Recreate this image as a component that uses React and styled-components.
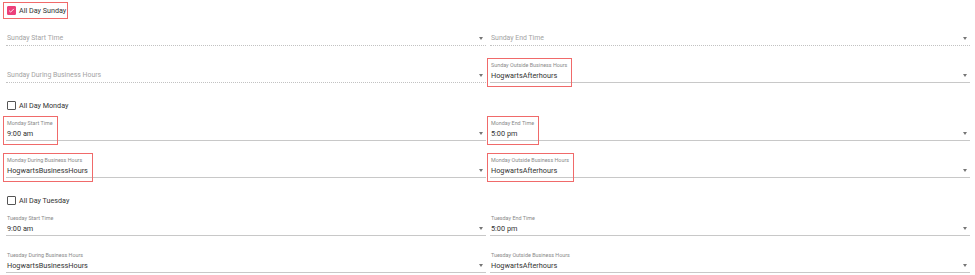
import styled, { createGlobalStyle, css } from 'styled-components';

const GlobalStyle = createGlobalStyle`
  body {
    margin: 0;
    background: #fff;
    font-family: Roboto, "Liberation Sans", sans-serif;
  }
`;

const MARK = '#f06a6a';

const highlight = css`
  &::after {
    content: '';
    position: absolute;
    top: -3px;
    bottom: -6px;
    left: -3px;
    right: -5px;
    border: 1px solid ${MARK};
    pointer-events: none;
  }
`;

const Page = styled.div`
  padding: 2px 5px 0 6px;
`;

const DaySection = styled.section`
  & + & {
    margin-top: 14px;
  }
`;

const CheckRow = styled.div`
  height: 17px;
  margin-bottom: 5px;
  display: flex;
`;

const CheckLabel = styled.label`
  display: inline-flex;
  align-items: center;
  gap: 3px;
  height: 17px;
  margin-left: -3px;
  padding: 0 2px 0 4px;
  font-size: 7.2px;
  color: #333;
  ${(p) => p.$marked && css`box-shadow: inset 0 0 0 1px ${MARK};`}
`;

const Box = styled.span`
  box-sizing: border-box;
  width: 9px;
  height: 9px;
  border-radius: 1px;
  display: flex;
  align-items: center;
  justify-content: center;
  border: 1.3px solid ${(p) => (p.$checked ? '#ec407a' : '#555')};
  background: ${(p) => (p.$checked ? '#ec407a' : 'transparent')};
`;

const Grid = styled.div`
  display: grid;
  grid-template-columns: 480px 480px;
  column-gap: 4px;
  row-gap: 15px;
`;

const Field = styled.div`
  display: flex;
  align-items: flex-end;
  height: 22px;
  box-sizing: border-box;
  padding-bottom: 1px;
  border-bottom: 1px ${(p) => (p.$disabled ? 'dotted #c2c2c2' : 'solid #c8c8c8')};
`;

const Content = styled.div`
  position: relative;
  padding-left: 1px;
  display: flex;
  flex-direction: column;
  ${(p) => p.$marked && highlight}
`;

const Label = styled.div`
  height: 9px;
  line-height: 9px;
  font-size: 5.4px;
  color: #8a8a8a;
  white-space: nowrap;
`;

const Value = styled.div`
  height: 11px;
  line-height: 11px;
  font-size: ${(p) => (p.$placeholder ? '6.9px' : '7.3px')};
  color: ${(p) => (p.$placeholder ? '#a4a4a4' : '#333')};
  white-space: nowrap;
`;

const ArrowSlot = styled.div`
  margin-left: auto;
  margin-right: 3px;
  height: 11px;
  display: flex;
  align-items: center;
`;

const Arrow = styled.span`
  width: 0;
  height: 0;
  border-left: 2.5px solid transparent;
  border-right: 2.5px solid transparent;
  border-top: 3px solid #757575;
`;

const Check = () => (
  <svg width="7" height="7" viewBox="0 0 24 24">
    <path d="M4 12.5l5 5L20 6.5" fill="none" stroke="#fff" strokeWidth="3" />
  </svg>
);

const SelectField = ({ label, value, marked }) => (
  <Field $disabled={!value}>
    <Content $marked={marked}>
      <Label>{value ? label : ''}</Label>
      <Value $placeholder={!value}>{value || label}</Value>
    </Content>
    <ArrowSlot>
      <Arrow />
    </ArrowSlot>
  </Field>
);

const days = [
  {
    name: 'Sunday',
    allDay: true,
    markCheck: true,
    start: null,
    end: null,
    during: null,
    outside: 'HogwartsAfterhours',
    marks: { outside: true },
  },
  {
    name: 'Monday',
    start: '9:00 am',
    end: '5:00 pm',
    during: 'HogwartsBusinessHours',
    outside: 'HogwartsAfterhours',
    marks: { start: true, end: true, during: true, outside: true },
  },
  {
    name: 'Tuesday',
    start: '9:00 am',
    end: '5:00 pm',
    during: 'HogwartsBusinessHours',
    outside: 'HogwartsAfterhours',
    marks: {},
  },
];

const App = () => (
  <Page>
    <GlobalStyle />
    {days.map((d) => (
      <DaySection key={d.name}>
        <CheckRow>
          <CheckLabel $marked={d.markCheck}>
            <Box $checked={d.allDay}>{d.allDay && <Check />}</Box>
            All Day {d.name}
          </CheckLabel>
        </CheckRow>
        <Grid>
          <SelectField label={`${d.name} Start Time`} value={d.start} marked={d.marks.start} />
          <SelectField label={`${d.name} End Time`} value={d.end} marked={d.marks.end} />
          <SelectField label={`${d.name} During Business Hours`} value={d.during} marked={d.marks.during} />
          <SelectField label={`${d.name} Outside Business Hours`} value={d.outside} marked={d.marks.outside} />
        </Grid>
      </DaySection>
    ))}
  </Page>
);

export default App;
